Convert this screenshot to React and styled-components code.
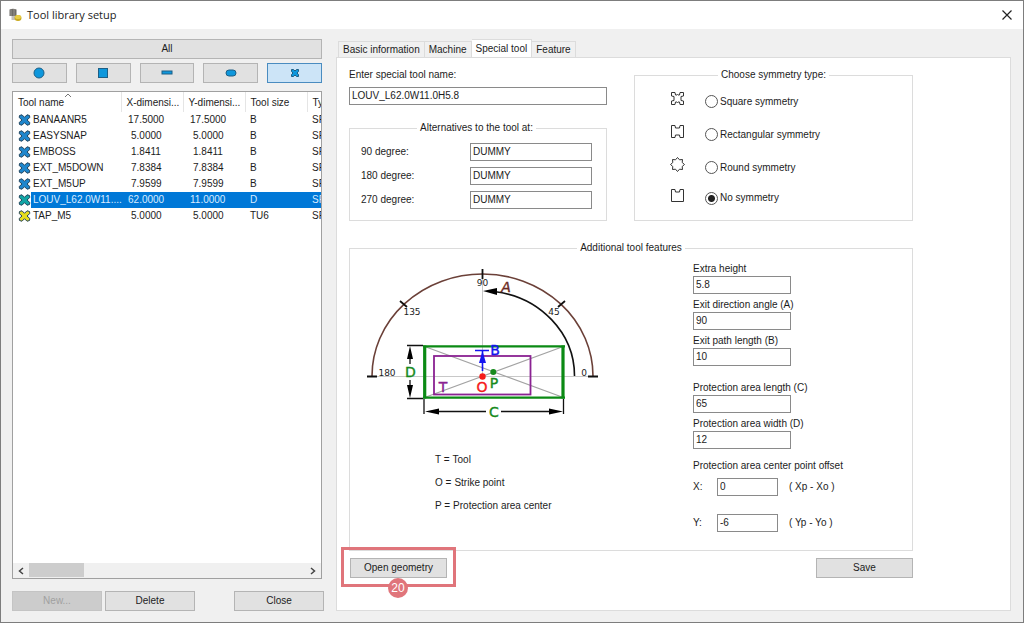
import React, { useState } from 'react';
import styled, { createGlobalStyle } from 'styled-components';

const GlobalStyle = createGlobalStyle`
  *, *::before, *::after {
    box-sizing: border-box;
  }

  body {
    margin: 0;
    color: #1c1c1c;
    font-family: "Liberation Sans", Arial, sans-serif;
    font-size: 10px;
    line-height: 14px;
  }

  button, input {
    font: inherit;
    color: inherit;
  }
`;

const Window = styled.div`
  display: flex;
  flex-direction: column;
  min-height: 100vh;
  background: #f0f0f0;
  border: 1px solid #7d7d7d;
`;

const TitleBar = styled.header`
  display: flex;
  align-items: center;
  gap: 5px;
  height: 28px;
  padding: 0 10px 0 7px;
  background: #fff;
`;

const Title = styled.h1`
  flex: 1;
  margin: 0;
  font-family: "Open Sans", "Noto Sans", sans-serif;
  font-size: 11px;
  font-weight: 400;
`;

const CloseIconButton = styled.button`
  display: flex;
  padding: 0;
  border: none;
  background: none;
`;

const Content = styled.main`
  display: flex;
  flex: 1;
  gap: 12px;
  padding: 10px 12px 11px 11px;
`;

const Sidebar = styled.section`
  display: flex;
  flex-direction: column;
  flex: 0 0 312px;
  min-width: 0;
`;

const Library = styled.div`
  display: flex;
  flex-direction: column;
  flex: 1;
  margin-right: 2px;
`;

const Button = styled.button`
  display: flex;
  align-items: center;
  justify-content: center;
  height: 20px;
  min-width: ${({ $width }) => $width || 0}px;
  padding: 0;
  background: ${({ $active }) => ($active ? '#cce4f7' : '#e1e1e1')};
  border: 1px solid ${({ $active }) => ($active ? '#4a8cc0' : '#b4b4b4')};

  &:disabled {
    color: #a0a0a0;
    background: #cccccc;
    border-color: #c4c4c4;
  }
`;

const ShapeFilters = styled.div`
  display: grid;
  grid-template-columns: repeat(5, 1fr);
  gap: 9px;
  margin: 4px 0 8px;
`;

const ListView = styled.div`
  display: flex;
  flex-direction: column;
  flex: 1;
  overflow: hidden;
  background: #fff;
  border: 1px solid #a0a0a0;
`;

const ToolTable = styled.table`
  width: 360px;
  table-layout: fixed;
  border-collapse: collapse;
  margin-bottom: auto;

  th, td {
    padding: 0 0 0 5px;
    font-weight: 400;
    text-align: left;
    white-space: nowrap;
  }

  th {
    height: 20px;
    padding-top: 1px;
    border-right: 1px solid #e5e5e5;
  }

  td {
    height: 16px;
  }

  td:nth-child(2) {
    padding-left: 2px;
  }
`;

const SortHeader = styled.div`
  position: relative;

  svg {
    position: absolute;
    top: -3px;
    left: 46px;
  }
`;

const ToolRow = styled.tr`
  td:not(:first-child) {
    color: ${({ $selected }) => ($selected ? '#d9ecff' : 'inherit')};
    background: ${({ $selected }) => ($selected ? '#0078d7' : 'none')};
  }

  td svg {
    display: block;
  }
`;

const NumberCell = styled.td`
  && {
    padding-left: ${({ $short }) => ($short ? 10 : 7)}px;
  }
`;

const ScrollBar = styled.div`
  display: flex;
  height: 15px;
  background: #f0f0f0;
`;

const ScrollArrow = styled.button`
  display: flex;
  align-items: center;
  justify-content: center;
  width: 16px;
  padding: 0;
  border: none;
  background: none;
`;

const ScrollTrack = styled.div`
  flex: 1;
`;

const ScrollThumb = styled.div`
  width: 20%;
  height: 14px;
  background: #cdcdcd;
`;

const SidebarActions = styled.div`
  display: flex;
  gap: 3px;
  margin-top: 12px;

  button:last-child {
    margin-left: auto;
  }
`;

const Details = styled.section`
  display: flex;
  flex-direction: column;
  flex: 1;
`;

const TabList = styled.div`
  display: flex;
  align-items: flex-end;
  height: 18px;
  padding-left: 2px;
`;

const Tab = styled.button`
  height: ${({ $active }) => ($active ? 19 : 16)}px;
  margin-bottom: ${({ $active }) => ($active ? -1 : 0)}px;
  padding: 0 4px;
  background: ${({ $active }) => ($active ? '#fff' : '#f0f0f0')};
  border: 1px solid #dcdcdc;
  border-bottom: none;
  border-left-width: ${({ $first }) => ($first ? 1 : 0)}px;
`;

const TabPanel = styled.div`
  flex: 1;
  padding: 10px 12px;
  background: #fff;
  border: 1px solid #dcdcdc;
`;

const Form = styled.form`
  max-width: 564px;
`;

const TopColumns = styled.div`
  display: grid;
  grid-template-columns: 258fr 279fr;
  gap: 27px;
  margin-bottom: 20px;
`;

const Column = styled.div`
  display: flex;
  flex-direction: column;
`;

const TextInput = styled.input`
  width: ${({ $width }) => ($width ? `${$width}px` : '100%')};
  height: 18px;
  padding: 0 2px 1px;
  background: #fff;
  border: 1px solid #8a8a8a;
  border-radius: 0;
`;

const NameField = styled.div`
  display: flex;
  flex-direction: column;
  gap: 5px;
  margin-bottom: 16px;
`;

const Group = styled.fieldset`
  min-width: 0;
  margin: 0;
  padding: ${({ $padding }) => $padding || 0};
  border: 1px solid #dcdcdc;

  > legend {
    margin: 0 auto;
    padding: 0 3px;
  }
`;

const AlternativeRow = styled.div`
  display: flex;
  align-items: center;
  justify-content: space-between;

  & + & {
    margin-top: 6px;
  }
`;

const SymmetryOptions = styled.div`
  display: grid;
  grid-template-rows: 33px 33px 33px 28px;
  padding: 3px 0 0 35px;
`;

const SymmetryRow = styled.div`
  display: flex;
  align-items: center;

  svg {
    margin: 0 20px 6px 0;
  }
`;

const Radio = styled.input`
  appearance: none;
  width: 13px;
  height: 13px;
  margin: 0 2px 0 0;
  background: #fff;
  border: 1px solid #555;
  border-radius: 50%;

  &:checked {
    background: radial-gradient(circle, #222 0 3px, #fff 4px);
  }
`;

const FeatureColumns = styled.div`
  display: grid;
  grid-template-columns: 343fr 219fr;
`;

const Diagram = styled.svg`
  display: block;
  margin: 4px 0 0 12px;
  font-family: "DejaVu Sans", sans-serif;
`;

const Key = styled.dl`
  display: grid;
  gap: 9px;
  margin: 28px 0 0 85px;
`;

const KeyRow = styled.div`
  display: flex;
  gap: 3px;

  dd {
    margin: 0;
  }
`;

const FieldStack = styled.div`
  display: grid;
  gap: 4px;
  margin-bottom: ${({ $space }) => $space}px;
`;

const Field = styled.div`
  display: flex;
  flex-direction: column;
`;

const OffsetTitle = styled.div`
  margin-bottom: 5px;
`;

const OffsetRow = styled.div`
  display: grid;
  grid-template-columns: 24px 61px 1fr;
  align-items: center;

  & + & {
    margin-top: 18px;
  }

  span {
    padding-left: 11px;
    white-space: pre;
  }
`;

const FormActions = styled.div`
  display: flex;
  justify-content: space-between;
  margin-top: 7px;
`;

const Callout = styled.div`
  position: relative;
  display: flex;
  padding-left: 1px;
`;

const CalloutFrame = styled.div`
  position: absolute;
  inset: -11px -9px -9px -8px;
  border: 3px solid #e0757b;
  pointer-events: none;
`;

const CalloutBadge = styled.span`
  position: absolute;
  bottom: -12px;
  left: 50%;
  display: flex;
  align-items: center;
  justify-content: center;
  width: 20px;
  height: 20px;
  margin: 0 0 -8px -10px;
  color: #fff;
  font-size: 12px;
  background: #e0757b;
  border-radius: 50%;
`;

const tools = [
  { name: 'BANAANR5', x: '17.5000', y: '17.5000', size: 'B' },
  { name: 'EASYSNAP', x: '5.0000', y: '5.0000', size: 'B' },
  { name: 'EMBOSS', x: '1.8411', y: '1.8411', size: 'B' },
  { name: 'EXT_M5DOWN', x: '7.8384', y: '7.8384', size: 'B' },
  { name: 'EXT_M5UP', x: '7.9599', y: '7.9599', size: 'B' },
  { name: 'LOUV_L62.0W11....', x: '62.0000', y: '11.0000', size: 'D', color: '#12a5a5', selected: true },
  { name: 'TAP_M5', x: '5.0000', y: '5.0000', size: 'TU6', color: '#e6dc1e' },
];

const shapes = [
  { id: 'round', label: 'Round', draw: <circle cx="8" cy="7" r="5" /> },
  { id: 'square', label: 'Square', draw: <rect x="3.5" y="2.5" width="9" height="9" /> },
  { id: 'rectangle', label: 'Rectangle', draw: <rect x="3" y="5" width="10" height="3" /> },
  { id: 'oblong', label: 'Oblong', draw: <rect x="3" y="4" width="10" height="6" rx="3" /> },
  {
    id: 'special',
    label: 'Special',
    draw: <path d="M4.5 3.5h2L8 5l1.5-1.500h2v2L10 7l1.500 1.500v2h-2L8 9l-1.500 1.500h-2v-2L6 7 4.500 5.500z" />,
  },
];

const symmetries = [
  {
    id: 'square',
    label: 'Square symmetry',
    path: 'M1.5 1.5H5L5.500 4H7L7.500 3.500L8 4H9.500L10 1.500H13.500V5L11 5.500V9.500L13.500 10V13.500H10L9.500 11H8L7.500 11.500L7 11H5.500L5 13.500H1.500V10L4 9.500V5.500L1.500 5Z',
  },
  {
    id: 'rectangular',
    label: 'Rectangular symmetry',
    path: 'M1.5 1.5H5L5.500 4H9.500L10 1.500H13.500V13.500H10L9.500 11H5.500L5 13.500H1.500Z',
  },
  {
    id: 'round',
    label: 'Round symmetry',
    path: 'M7.5 .5L9.5 2.8L12.5 2.5L12.2 5.5L14.5 7.5L12.2 9.5L12.5 12.5L9.5 12.2L7.5 14.5L5.5 12.2L2.5 12.5L2.8 9.5L.5 7.5L2.8 5.5L2.5 2.5L5.5 2.8Z',
  },
  {
    id: 'none',
    label: 'No symmetry',
    path: 'M1.5 1.5H5L5.500 4H9.500L10 1.500H13.500V13.500H1.500Z',
  },
];

const AppIcon = () => (
  <svg width="14" height="14" viewBox="0 0 14 14" aria-hidden="true">
    <path d="M1.5 1.5Q5 0 8.5 1.5V8H1.5Z" fill="#6d6a66" />
    <path d="M3 1.5V8M6 1V8" stroke="#99958f" />
    <path d="M3.5 8H7V12H3.5Z" fill="#c4c0ba" />
    <ellipse cx="10" cy="10" rx="3.5" ry="3" fill="#c9a91c" />
    <ellipse cx="10" cy="9" rx="3" ry="2" fill="#e8cd45" />
  </svg>
);

const CrossIcon = ({ color = '#1f86cc' }) => (
  <svg width="13" height="12" viewBox="0 0 13 12" aria-hidden="true">
    <path
      d="M1.5 1.5L4 .8L6.5 3.3L9 .8L11.5 1.5L11.8 3.5L9 6L11.8 8.5L11.5 10.5L9 11.2L6.5 8.7L4 11.2L1.5 10.5L1.2 8.5L4 6L1.2 3.5Z"
      fill={color}
      stroke="#24465e"
    />
  </svg>
);

const Chevron = ({ d }) => (
  <svg width="8" height="8" viewBox="0 0 8 8" fill="none" stroke="#444" strokeWidth="1.5" aria-hidden="true">
    <path d={d} />
  </svg>
);

const ToolDiagram = () => (
  <Diagram width="240" height="159" viewBox="362 266 240 159" role="img" aria-label="Tool geometry">
    <path d="M377 376.5H588M482.5 279V376" stroke="#c8c8c8" />
    <path d="M426 347L562 397M426 397L562 347" stroke="#a3a3a3" strokeWidth="1.3" />

    <path d="M372 376A110.5 102 0 0 1 593 376" fill="none" stroke="#6b4038" strokeWidth="1.6" />
    <path d="M482.5 269V279M400 301L407 307M558 307L565 301M367 376.5H377M588 376.5H598" stroke="#111" strokeWidth="1.8" />
    <path d="M574.5 376A92 85 0 0 0 494 291.500" fill="none" stroke="#111" strokeWidth="1.6" />
    <path d="M483 291L497 288V295Z" fill="#000" />

    <rect x="434" y="356" width="96.5" height="38.5" fill="none" stroke="#8a2292" strokeWidth="1.8" />
    <path d="M423 346.3H565M423 397.7H565" stroke="#0b8a14" strokeWidth="2.2" />
    <path d="M424.7 345.5V398.5M563 345.5V398.5" stroke="#0b8a14" strokeWidth="3.2" />

    <path d="M407 345.5H423M407 398.5H423M410 350V364M410 380V394M424 399V414M563.5 399V414M434 411.5H486M501 411.5H552" stroke="#111" strokeWidth="1.3" />
    <path d="M410 346L413 359H407ZM410 398L413 385H407ZM425 411.5L439 408.5V414.5ZM563 411.5L549 408.5V414.5Z" fill="#000" />

    <path d="M475 350.5H489M482.5 351V371" stroke="#1414f0" strokeWidth="1.6" />
    <path d="M482.5 351L486 363H479Z" fill="#1414f0" />
    <circle cx="482.5" cy="376.5" r="3.2" fill="#f51b1b" />
    <circle cx="493.3" cy="372" r="3" fill="#168a1c" />

    <g fontSize="9" fill="#222" textAnchor="middle">
      <text x="482.5" y="286">90</text>
      <text x="412" y="315">135</text>
      <text x="554" y="315">45</text>
      <text x="387" y="376">180</text>
      <text x="584" y="376">0</text>
    </g>
    <g fontSize="14" textAnchor="middle" strokeWidth="0.4">
      <text x="506" y="292" fill="#6b2a22" stroke="#6b2a22" fontStyle="italic">A</text>
      <text x="495" y="355" fill="#1414f0" stroke="#1414f0">B</text>
      <text x="410.5" y="377" fill="#168a1c" stroke="#168a1c">D</text>
      <text x="443" y="392" fill="#8a2292" stroke="#8a2292">T</text>
      <text x="482" y="392" fill="#f51b1b" stroke="#f51b1b">O</text>
      <text x="494" y="388" fill="#168a1c" stroke="#168a1c">P</text>
      <text x="494" y="417" fill="#168a1c" stroke="#168a1c">C</text>
    </g>
  </Diagram>
);

const ToolList = () => (
  <ListView>
    <ToolTable>
      <colgroup>
        <col style={{ width: 18 }} />
        <col style={{ width: 90 }} />
        <col style={{ width: 62 }} />
        <col style={{ width: 62 }} />
        <col style={{ width: 62 }} />
        <col />
      </colgroup>
      <thead>
        <tr>
          <th colSpan={2}>
            <SortHeader>
              Tool name
              <svg width="8" height="5" viewBox="0 0 8 5" fill="none" stroke="#777" aria-hidden="true">
                <path d="M1 4L4 1L7 4" />
              </svg>
            </SortHeader>
          </th>
          <th>X-dimensi...</th>
          <th>Y-dimensi...</th>
          <th>Tool size</th>
          <th>Type</th>
        </tr>
      </thead>
      <tbody>
        {tools.map((tool) => (
          <ToolRow key={tool.name} $selected={tool.selected}>
            <td><CrossIcon color={tool.color} /></td>
            <td>{tool.name}</td>
            <NumberCell $short={tool.x.length < 7}>{tool.x}</NumberCell>
            <NumberCell $short={tool.y.length < 7}>{tool.y}</NumberCell>
            <td>{tool.size}</td>
            <td>SPECIAL</td>
          </ToolRow>
        ))}
      </tbody>
    </ToolTable>
    <ScrollBar>
      <ScrollArrow aria-label="Scroll left"><Chevron d="M6 1L2.500 4L6 7" /></ScrollArrow>
      <ScrollTrack><ScrollThumb /></ScrollTrack>
      <ScrollArrow aria-label="Scroll right"><Chevron d="M2 1L5.500 4L2 7" /></ScrollArrow>
    </ScrollBar>
  </ListView>
);

const FeatureField = ({ id, label, value }) => (
  <Field>
    <label htmlFor={id}>{label}</label>
    <TextInput id={id} $width={98} defaultValue={value} />
  </Field>
);

const SpecialToolForm = () => {
  const [symmetry, setSymmetry] = useState('none');

  return (
    <Form onSubmit={(e) => e.preventDefault()}>
      <TopColumns>
        <Column>
          <NameField>
            <label htmlFor="tool-name">Enter special tool name:</label>
            <TextInput id="tool-name" defaultValue="LOUV_L62.0W11.0H5.8" />
          </NameField>
          <Group $padding="8px 14px 11px 11px">
            <legend>Alternatives to the tool at:</legend>
            {[90, 180, 270].map((angle) => (
              <AlternativeRow key={angle}>
                <label htmlFor={`alt-${angle}`}>{angle} degree:</label>
                <TextInput id={`alt-${angle}`} $width={122} defaultValue="DUMMY" />
              </AlternativeRow>
            ))}
          </Group>
        </Column>
        <Group>
          <legend>Choose symmetry type:</legend>
          <SymmetryOptions>
            {symmetries.map(({ id, label, path }) => (
              <SymmetryRow key={id}>
                <svg width="15" height="15" viewBox="0 0 15 15" fill="none" stroke="#333" aria-hidden="true">
                  <path d={path} />
                </svg>
                <Radio
                  type="radio"
                  name="symmetry"
                  id={`symmetry-${id}`}
                  checked={symmetry === id}
                  onChange={() => setSymmetry(id)}
                />
                <label htmlFor={`symmetry-${id}`}>{label}</label>
              </SymmetryRow>
            ))}
          </SymmetryOptions>
        </Group>
      </TopColumns>

      <Group $padding="7px 0 18px">
        <legend>Additional tool features</legend>
        <FeatureColumns>
          <div>
            <ToolDiagram />
            <Key>
              <KeyRow><dt>T =</dt><dd>Tool</dd></KeyRow>
              <KeyRow><dt>O =</dt><dd>Strike point</dd></KeyRow>
              <KeyRow><dt>P =</dt><dd>Protection area center</dd></KeyRow>
            </Key>
          </div>
          <div>
            <FieldStack $space={15}>
              <FeatureField id="height" label="Extra height" value="5.8" />
              <FeatureField id="exit-angle" label="Exit direction angle (A)" value="90" />
              <FeatureField id="exit-path" label="Exit path length (B)" value="10" />
            </FieldStack>
            <FieldStack $space={10}>
              <FeatureField id="area-length" label="Protection area length (C)" value="65" />
              <FeatureField id="area-width" label="Protection area width (D)" value="12" />
            </FieldStack>
            <OffsetTitle>Protection area center point offset</OffsetTitle>
            <OffsetRow>
              <label htmlFor="offset-x">X:</label>
              <TextInput id="offset-x" defaultValue="0" />
              <span>{'( Xp - Xo )'}</span>
            </OffsetRow>
            <OffsetRow>
              <label htmlFor="offset-y">Y:</label>
              <TextInput id="offset-y" defaultValue="-6" />
              <span>{'( Yp - Yo )'}</span>
            </OffsetRow>
          </div>
        </FeatureColumns>
      </Group>

      <FormActions>
        <Callout>
          <Button type="button" $width={97}>Open geometry</Button>
          <CalloutFrame />
          <CalloutBadge>20</CalloutBadge>
        </Callout>
        <Button type="submit" $width={97}>Save</Button>
      </FormActions>
    </Form>
  );
};

const tabs = ['Basic information', 'Machine', 'Special tool', 'Feature'];

const App = () => (
  <>
    <GlobalStyle />
    <Window>
      <TitleBar>
        <AppIcon />
        <Title>Tool library setup</Title>
        <CloseIconButton aria-label="Close window">
          <svg width="12" height="12" viewBox="0 0 12 12" stroke="#222" strokeWidth="1.2" aria-hidden="true">
            <path d="M1.5 1.5L10.5 10.5M10.5 1.5L1.5 10.5" />
          </svg>
        </CloseIconButton>
      </TitleBar>
      <Content>
        <Sidebar>
          <Library>
            <Button>All</Button>
            <ShapeFilters>
              {shapes.map(({ id, label, draw }) => (
                <Button key={id} $active={id === 'special'} aria-label={label}>
                  <svg width="16" height="14" viewBox="0 0 16 14" fill="#0e97dc" stroke="#1d5f86" aria-hidden="true">
                    {draw}
                  </svg>
                </Button>
              ))}
            </ShapeFilters>
            <ToolList />
          </Library>
          <SidebarActions>
            <Button disabled $width={90}>New...</Button>
            <Button $width={90}>Delete</Button>
            <Button $width={90}>Close</Button>
          </SidebarActions>
        </Sidebar>
        <Details>
          <TabList role="tablist">
            {tabs.map((tab, i) => (
              <Tab
                key={tab}
                role="tab"
                aria-selected={tab === 'Special tool'}
                $active={tab === 'Special tool'}
                $first={i === 0}
              >
                {tab}
              </Tab>
            ))}
          </TabList>
          <TabPanel role="tabpanel">
            <SpecialToolForm />
          </TabPanel>
        </Details>
      </Content>
    </Window>
  </>
);

export default App;
